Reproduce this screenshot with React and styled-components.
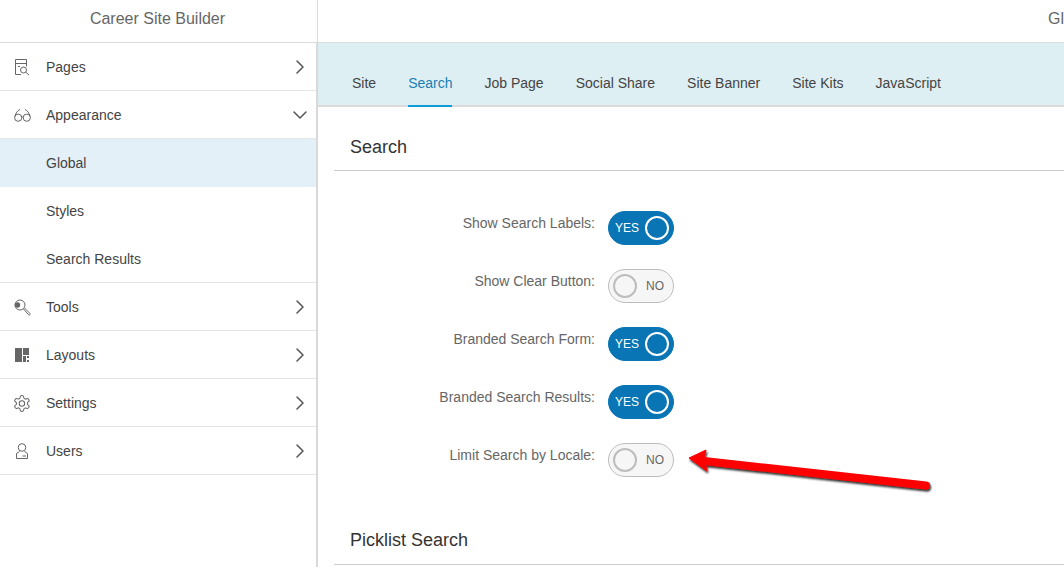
import React from 'react';
import styled, { createGlobalStyle } from 'styled-components';
import { ChevronRight, ChevronDown } from 'lucide-react';

const GlobalStyle = createGlobalStyle`
  html, body {
    margin: 0;
    height: 100%;
    overflow: hidden;
    background: #fff;
    font-family: "Liberation Sans", Arial, sans-serif;
  }
  * {
    box-sizing: border-box;
  }
`;

const Page = styled.div`
  position: relative;
  width: 1064px;
  height: 567px;
  overflow: hidden;
`;

const TopBar = styled.header`
  display: flex;
  height: 43px;
  border-bottom: 1px solid #dcdcdc;
`;

const Brand = styled.div`
  width: 318px;
  flex: none;
  border-right: 1px solid #dcdcdc;
  padding-bottom: 5px;
  display: flex;
  align-items: center;
  justify-content: center;
  padding-right: 2px;
  font-size: 16px;
  color: #666;
`;

const TopTitle = styled.div`
  flex: 1;
  overflow: hidden;
  white-space: nowrap;
  padding-left: 730px;
  padding-bottom: 5px;
  display: flex;
  align-items: center;
  font-size: 16px;
  color: #666;
`;

const Body = styled.div`
  display: flex;
  height: 524px;
`;

const Sidebar = styled.nav`
  width: 318px;
  flex: none;
  border-right: 2px solid #d9d9d9;
`;

const MenuRow = styled.div`
  display: flex;
  align-items: center;
  height: 48px;
  padding: 1px 4px 0 14px;
  font-size: 14px;
  color: #444;
  background: ${(p) => (p.$active ? '#e3f0f7' : '#fff')};
  border-bottom: 1px solid ${(p) => (p.$plain ? 'transparent' : '#e5e5e5')};
`;

const MenuIcon = styled.span`
  width: 32px;
  height: 18px;
  flex: none;
  display: flex;
  align-items: center;
  color: #666;
`;

const MenuLabel = styled.span`
  flex: 1;
`;

const Content = styled.main`
  flex: 1;
  min-width: 0;
`;

const TabBar = styled.div`
  display: flex;
  gap: 32px;
  height: 64px;
  padding: 0 0 0 34px;
  background: #deeff3;
  border-bottom: 2px solid #dadada;
`;

const Tab = styled.div`
  height: 64px;
  padding-top: 32px;
  font-size: 14px;
  line-height: 16px;
  white-space: nowrap;
  color: ${(p) => (p.$active ? '#1a7fb5' : '#444')};
  border-bottom: 2px solid ${(p) => (p.$active ? '#0f9bd7' : 'transparent')};
`;

const Section = styled.section`
  margin-left: 16px;
`;

const SectionTitle = styled.h2`
  margin: 0;
  height: ${(p) => p.$height}px;
  padding: 29px 0 0 16px;
  font-size: 18px;
  line-height: 22px;
  font-weight: 400;
  color: #333;
  border-bottom: 1px solid #ccc;
`;

const Form = styled.div`
  display: flex;
  flex-direction: column;
  gap: 24px;
  padding: 40px 0 23px;
`;

const FormRow = styled.div`
  display: flex;
  align-items: flex-start;
  gap: 13px;
`;

const FieldLabel = styled.label`
  width: 261px;
  padding-top: 4px;
  text-align: right;
  font-size: 14px;
  line-height: 16px;
  color: #666;
`;

const Toggle = styled.div`
  width: 66px;
  height: 34px;
  border-radius: 17px;
  display: flex;
  align-items: center;
  flex-direction: ${(p) => (p.$on ? 'row' : 'row-reverse')};
  justify-content: space-between;
  padding: ${(p) => (p.$on ? '0 4px 0 6px' : '0 9px 0 4px')};
  font-size: 12px;
  background: ${(p) => (p.$on ? '#0a75b5' : '#f6f6f6')};
  border: 1px solid ${(p) => (p.$on ? '#0a75b5' : '#bdbdbd')};
  color: ${(p) => (p.$on ? '#fff' : '#666')};
`;

const Knob = styled.span`
  width: 24px;
  height: 24px;
  border-radius: 50%;
  border: 2px solid ${(p) => (p.$on ? '#fff' : '#bdbdbd')};
  background: ${(p) => (p.$on ? '#0a75b5' : '#f6f6f6')};
`;

const Arrow = styled.svg`
  position: absolute;
  left: 680px;
  top: 440px;
  overflow: visible;
`;

const PagesIcon = () => (
  <svg width="16" height="17" viewBox="0 0 16 17" fill="none" stroke="#666" strokeWidth="1">
    <path d="M7 15.5H1.5V.5h11v7M1.5 4.5h11M4 7.5h2" />
    <circle cx="9.5" cy="11" r="3" />
    <path d="M11.7 13.2 15 16" />
  </svg>
);

const GlassesIcon = () => (
  <svg width="17" height="14" viewBox="0 0 17 14" fill="none" stroke="#666" strokeWidth="1">
    <circle cx="4.2" cy="9.7" r="3.6" />
    <circle cx="12.8" cy="9.7" r="3.6" />
    <path d="M7.6 9.2c.6-.4 1.2-.4 1.8 0M.9 8.5C1.8 5 3.5 2.5 6 1.5M16.1 8.5C15.2 5 13.5 2.5 11 1.5" />
  </svg>
);

const ToolsIcon = () => (
  <svg width="17" height="17" viewBox="0 0 17 17" fill="none" stroke="#666" strokeWidth="1">
    <circle cx="6" cy="6" r="5" />
    <circle cx="3.5" cy="6" r="2.7" fill="#666" stroke="none" />
    <path d="M9.5 10 14.5 15.7c.5.5 1 .4 1.4 0 .4-.4.4-.9 0-1.3L10.5 9" />
  </svg>
);

const LayoutsIcon = () => (
  <svg width="16" height="14" viewBox="0 0 16 14" fill="#666">
    <rect x="1" y="0" width="7" height="14" />
    <rect x="9" y="0" width="6" height="7" />
    <rect x="9" y="8" width="3" height="6" />
    <rect x="13" y="8" width="2" height="2" />
    <rect x="13" y="12" width="2" height="2" />
  </svg>
);

const GearIcon = () => (
  <svg width="19" height="19" viewBox="2 0 24 24" fill="none" stroke="#666" strokeWidth="1.3">
    <path d="M12.22 2h-.44a2 2 0 0 0-2 2v.18a2 2 0 0 1-1 1.73l-.43.25a2 2 0 0 1-2 0l-.15-.08a2 2 0 0 0-2.73.73l-.22.38a2 2 0 0 0 .73 2.73l.15.1a2 2 0 0 1 1 1.72v.51a2 2 0 0 1-1 1.74l-.15.09a2 2 0 0 0-.73 2.73l.22.38a2 2 0 0 0 2.73.73l.15-.08a2 2 0 0 1 2 0l.43.25a2 2 0 0 1 1 1.73V20a2 2 0 0 0 2 2h.44a2 2 0 0 0 2-2v-.18a2 2 0 0 1 1-1.73l.43-.25a2 2 0 0 1 2 0l.15.08a2 2 0 0 0 2.73-.73l.22-.39a2 2 0 0 0-.73-2.73l-.15-.08a2 2 0 0 1-1-1.74v-.5a2 2 0 0 1 1-1.74l.15-.09a2 2 0 0 0 .73-2.73l-.22-.38a2 2 0 0 0-2.73-.73l-.15.08a2 2 0 0 1-2 0l-.43-.25a2 2 0 0 1-1-1.73V4a2 2 0 0 0-2-2z" />
    <circle cx="12" cy="12" r="3.4" />
  </svg>
);

const UserIcon = () => (
  <svg width="16" height="17" viewBox="0 0 16 17" fill="none" stroke="#666" strokeWidth="1">
    <circle cx="8" cy="4.5" r="3.8" />
    <path d="M5.5 8.5 2.5 10.5v5h11v-5l-3-2M8.5 13h3.5" />
  </svg>
);

const menu = [
  { label: 'Pages', icon: <PagesIcon />, chevron: 'right' },
  { label: 'Appearance', icon: <GlassesIcon />, chevron: 'down' },
  { label: 'Global', active: true, plain: true },
  { label: 'Styles', plain: true },
  { label: 'Search Results' },
  { label: 'Tools', icon: <ToolsIcon />, chevron: 'right' },
  { label: 'Layouts', icon: <LayoutsIcon />, chevron: 'right' },
  { label: 'Settings', icon: <GearIcon />, chevron: 'right' },
  { label: 'Users', icon: <UserIcon />, chevron: 'right' },
];

const tabs = ['Site', 'Search', 'Job Page', 'Social Share', 'Site Banner', 'Site Kits', 'JavaScript'];

const fields = [
  { label: 'Show Search Labels:', on: true },
  { label: 'Show Clear Button:', on: false },
  { label: 'Branded Search Form:', on: true },
  { label: 'Branded Search Results:', on: true },
  { label: 'Limit Search by Locale:', on: false },
];

export default function App() {
  return (
    <Page>
      <GlobalStyle />
      <TopBar>
        <Brand>Career Site Builder</Brand>
        <TopTitle>Global</TopTitle>
      </TopBar>
      <Body>
        <Sidebar>
          {menu.map((item) => (
            <MenuRow key={item.label} $active={item.active} $plain={item.plain}>
              <MenuIcon>{item.icon}</MenuIcon>
              <MenuLabel>{item.label}</MenuLabel>
              {item.chevron === 'right' && <ChevronRight size={24} color="#555" strokeWidth={1.5} />}
              {item.chevron === 'down' && <ChevronDown size={24} color="#555" strokeWidth={1.5} />}
            </MenuRow>
          ))}
        </Sidebar>
        <Content>
          <TabBar>
            {tabs.map((tab) => (
              <Tab key={tab} $active={tab === 'Search'}>{tab}</Tab>
            ))}
          </TabBar>
          <Section>
            <SectionTitle $height={64}>Search</SectionTitle>
            <Form>
              {fields.map((field) => (
                <FormRow key={field.label}>
                  <FieldLabel>{field.label}</FieldLabel>
                  <Toggle $on={field.on}>
                    <span>{field.on ? 'YES' : 'NO'}</span>
                    <Knob $on={field.on} />
                  </Toggle>
                </FormRow>
              ))}
            </Form>
            <SectionTitle $height={65}>Picklist Search</SectionTitle>
          </Section>
        </Content>
      </Body>
      <Arrow width="260" height="60" viewBox="0 0 260 60">
        <defs>
          <filter id="arrowShadow" x="-10%" y="-30%" width="120%" height="170%">
            <feDropShadow dx="1" dy="2" stdDeviation="1" floodColor="#000" floodOpacity="0.85" />
          </filter>
        </defs>
        <g filter="url(#arrowShadow)">
          <path d="M24 21 246 45.5" stroke="#f00" strokeWidth="8" strokeLinecap="round" fill="none" />
          <path d="M9 18 26 10 24 18 27 31z" fill="#f00" stroke="#f00" strokeWidth="1" strokeLinejoin="round" />
        </g>
      </Arrow>
    </Page>
  );
}
